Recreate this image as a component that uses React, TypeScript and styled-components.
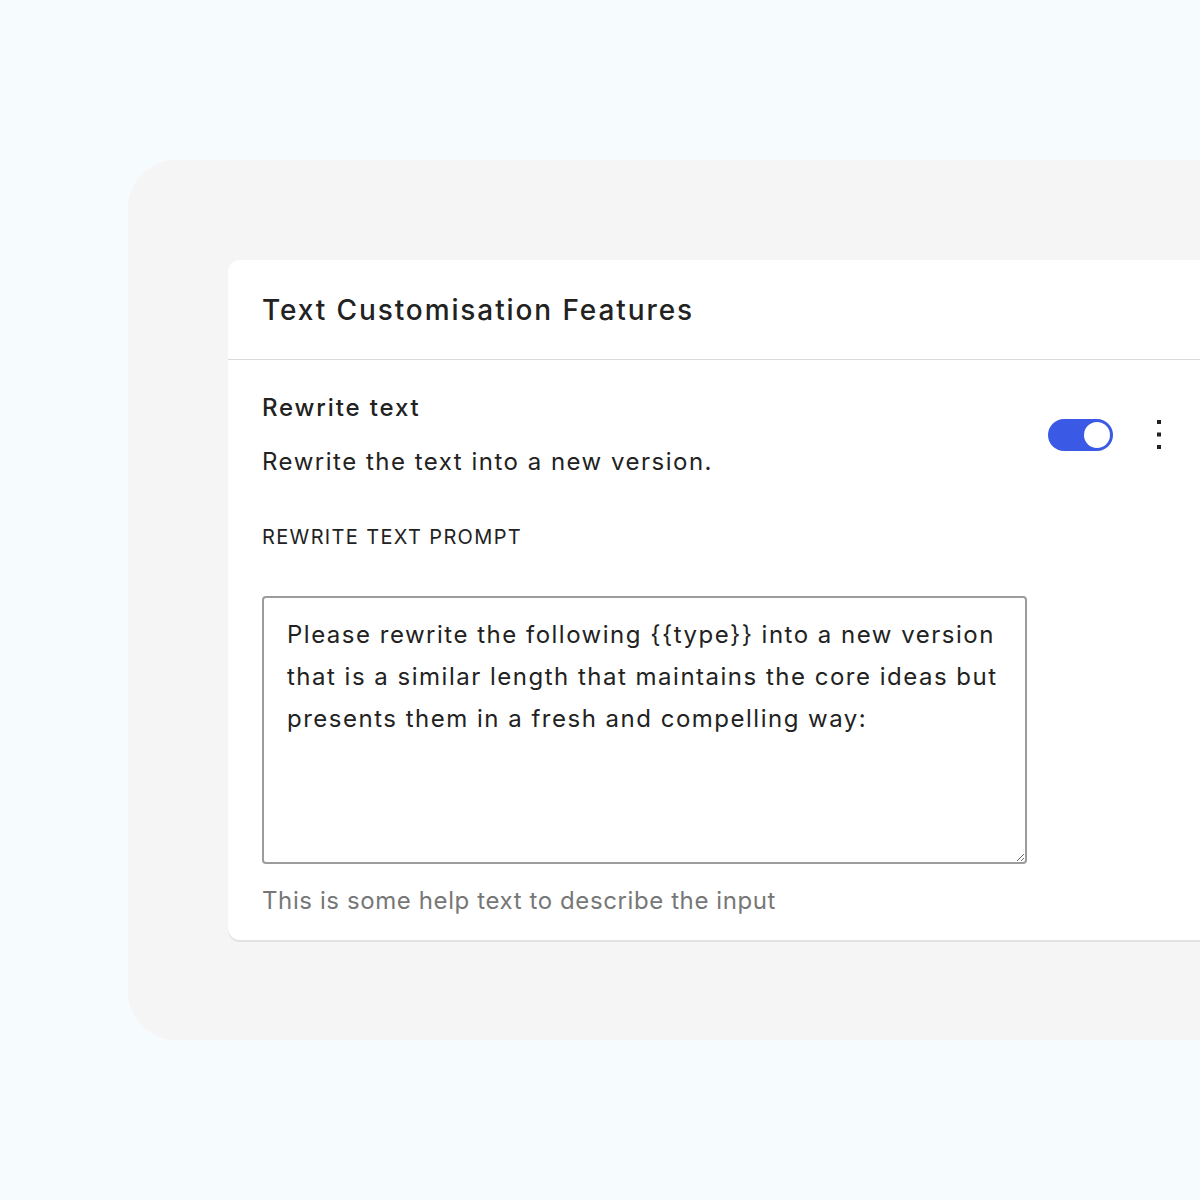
import React, { useState } from "react";
import styled, { createGlobalStyle } from "styled-components";

const TEXT = "#222";
const MUTED = "#777";
const BLUE = "#3a5ae6";

const GlobalStyle = createGlobalStyle`
  html, body {
    margin: 0;
    padding: 0;
    background: #f6fbfe;
    overflow: hidden;
  }
  body {
    font-family: Inter, "Noto Sans", "Liberation Sans", sans-serif;
    color: ${TEXT};
  }
`;

const Page = styled.div`
  width: 1200px;
  height: 1200px;
  overflow: hidden;
  padding: 160px 0 0 128px;
  box-sizing: border-box;
`;

const Backdrop = styled.div`
  width: 1200px;
  height: 880px;
  background: #f5f5f5;
  border-radius: 48px 0 0 48px;
  padding: 100px 0 0 100px;
  box-sizing: border-box;
`;

const Card = styled.section`
  width: 977px;
  background: #fff;
  border-radius: 12px 0 0 12px;
  box-shadow: 0 2px 0 #e2e2e2;
`;

const CardHeader = styled.header`
  height: 99px;
  display: flex;
  align-items: center;
  padding: 0 34px;
  border-bottom: 1.5px solid #dadada;
`;

const Title = styled.h2`
  margin: 0;
  font-size: 28px;
  font-weight: 500;
  letter-spacing: 1.9px;
`;

const CardBody = styled.div`
  padding: 32px 34px 23px;
`;

const FeatureRow = styled.div`
  display: flex;
  align-items: center;
  justify-content: space-between;
`;

const FeatureText = styled.div`
  display: flex;
  flex-direction: column;
  gap: 22px;
`;

const FeatureName = styled.div`
  font-size: 24px;
  line-height: 32px;
  font-weight: 500;
  letter-spacing: 1.85px;
`;

const FeatureDesc = styled.div`
  font-size: 24px;
  line-height: 32px;
  letter-spacing: 1.5px;
`;

const Controls = styled.div`
  display: flex;
  align-items: center;
  gap: 34px;
`;

const Switch = styled.button<{ $on: boolean }>`
  width: 65px;
  height: 32px;
  border: none;
  padding: 0;
  border-radius: 16px;
  background: ${(p) => (p.$on ? BLUE : "#c4c4c4")};
  position: relative;
  cursor: pointer;

  &::after {
    content: "";
    position: absolute;
    top: 3px;
    left: ${(p) => (p.$on ? "36px" : "3px")};
    width: 26px;
    height: 26px;
    border-radius: 50%;
    background: #fff;
  }
`;

const MenuButton = styled.button`
  width: 24px;
  height: 40px;
  border: none;
  background: none;
  padding: 0;
  display: flex;
  align-items: center;
  justify-content: center;
  cursor: pointer;
`;

const FieldLabel = styled.label`
  display: block;
  margin-top: 45px;
  font-size: 20px;
  line-height: 28px;
  letter-spacing: 1.35px;
  text-transform: uppercase;
`;

const PromptInput = styled.textarea`
  display: block;
  margin-top: 45px;
  width: 765px;
  height: 268px;
  box-sizing: border-box;
  padding: 16px 6px 16px 23px;
  border: 2px solid #9c9c9c;
  border-radius: 4px;
  font-family: inherit;
  font-size: 24px;
  line-height: 42px;
  letter-spacing: 1.5px;
  color: ${TEXT};
  resize: both;
  overflow: hidden;
  outline: none;
`;

const HelpText = styled.div`
  margin-top: 21px;
  font-size: 24px;
  line-height: 32px;
  letter-spacing: 0.6px;
  color: ${MUTED};
`;

const Kebab = () => (
  <svg width="6" height="34" viewBox="0 0 6 34">
    <rect x="1" y="2" width="4" height="4" fill={TEXT} />
    <rect x="1" y="14.5" width="4" height="4" fill={TEXT} />
    <rect x="1" y="27" width="4" height="4" fill={TEXT} />
  </svg>
);

const PROMPT =
  "Please rewrite the following {{type}} into a new version that is a similar length that maintains the core ideas but presents them in a fresh and compelling way:";

export default function App() {
  const [enabled, setEnabled] = useState(true);

  return (
    <>
      <GlobalStyle />
      <Page>
        <Backdrop>
          <Card>
            <CardHeader>
              <Title>Text Customisation Features</Title>
            </CardHeader>
            <CardBody>
              <FeatureRow>
                <FeatureText>
                  <FeatureName>Rewrite text</FeatureName>
                  <FeatureDesc>Rewrite the text into a new version.</FeatureDesc>
                </FeatureText>
                <Controls>
                  <Switch
                    $on={enabled}
                    aria-label="Toggle rewrite text"
                    onClick={() => setEnabled(!enabled)}
                  />
                  <MenuButton aria-label="More options">
                    <Kebab />
                  </MenuButton>
                </Controls>
              </FeatureRow>
              <FieldLabel htmlFor="rewrite-prompt">Rewrite text prompt</FieldLabel>
              <PromptInput id="rewrite-prompt" defaultValue={PROMPT} />
              <HelpText>This is some help text to describe the input</HelpText>
            </CardBody>
          </Card>
        </Backdrop>
      </Page>
    </>
  );
}
